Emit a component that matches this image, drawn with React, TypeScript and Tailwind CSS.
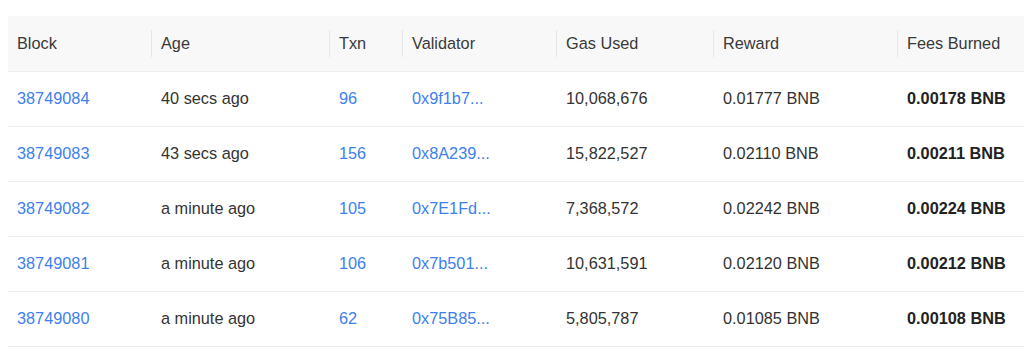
const columns = [
  { label: "Block", width: "w-[143px]" },
  { label: "Age", width: "w-[178px]" },
  { label: "Txn", width: "w-[73px]" },
  { label: "Validator", width: "w-[154px]" },
  { label: "Gas Used", width: "w-[157px]" },
  { label: "Reward", width: "w-[184px]" },
  { label: "Fees Burned", width: "" },
];

const blocks = [
  { block: "38749084", age: "40 secs ago", txn: "96", validator: "0x9f1b7...", gas: "10,068,676", reward: "0.01777 BNB", burned: "0.00178 BNB" },
  { block: "38749083", age: "43 secs ago", txn: "156", validator: "0x8A239...", gas: "15,822,527", reward: "0.02110 BNB", burned: "0.00211 BNB" },
  { block: "38749082", age: "a minute ago", txn: "105", validator: "0x7E1Fd...", gas: "7,368,572", reward: "0.02242 BNB", burned: "0.00224 BNB" },
  { block: "38749081", age: "a minute ago", txn: "106", validator: "0x7b501...", gas: "10,631,591", reward: "0.02120 BNB", burned: "0.00212 BNB" },
  { block: "38749080", age: "a minute ago", txn: "62", validator: "0x75B85...", gas: "5,805,787", reward: "0.01085 BNB", burned: "0.00108 BNB" },
];

export default function App() {
  return (
    <div className="w-[1024px] h-[351px] bg-white overflow-hidden pt-4 pl-2 font-['Liberation_Sans',Arial,sans-serif] text-[16.3px] text-[#333]">
      <table className="w-[1016px] table-fixed border-collapse">
        <thead>
          <tr className="bg-[#f8f8f8] h-[55px] border-b border-[#eeeeee]">
            {columns.map((col, i) => (
              <th key={col.label} className={`${col.width} p-0 font-normal text-left text-[#3a3a3a]`}>
                {i === 0 ? (
                  <div className="pl-[9px]">{col.label}</div>
                ) : (
                  <div className="h-[27px] border-l border-[#e6e6e6] pl-[9px] flex items-center">{col.label}</div>
                )}
              </th>
            ))}
          </tr>
        </thead>
        <tbody>
          {blocks.map((b) => (
            <tr key={b.block} className="h-[55px] border-b border-[#eeeeee]">
              <td className="pl-[9px] text-[#3d80ee]">{b.block}</td>
              <td className="pl-[10px]">{b.age}</td>
              <td className="pl-[10px] text-[#3d80ee]">{b.txn}</td>
              <td className="pl-[10px] text-[#3d80ee]">{b.validator}</td>
              <td className="pl-[10px]">{b.gas}</td>
              <td className="pl-[10px]">{b.reward}</td>
              <td className="pl-[10px] font-bold text-[#222]">{b.burned}</td>
            </tr>
          ))}
        </tbody>
      </table>
    </div>
  );
}
